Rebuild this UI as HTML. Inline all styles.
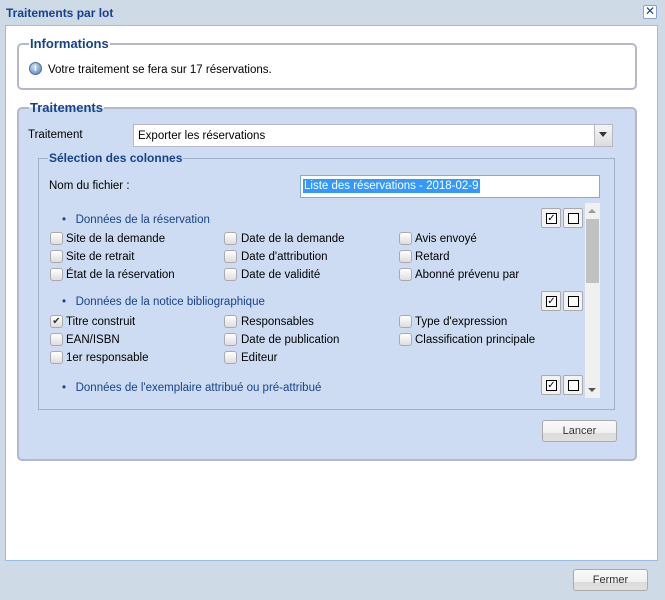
<!DOCTYPE html>
<html><head><meta charset="utf-8"><style>
*{box-sizing:border-box;margin:0;padding:0}
body{width:665px;height:600px;background:#cfdae7;font-family:"Liberation Sans",sans-serif;font-size:11px;color:#000;position:relative;overflow:hidden}
.a{position:absolute}
.title{left:6px;top:6px;font-weight:bold;color:#15428b;font-size:12px}
.close{left:643px;top:5px;width:14px;height:14px;border:1px solid #8aa3c6;background:#fff;border-radius:2px;font-size:12px;line-height:11px;text-align:center;color:#15428b}
.body{left:5px;top:25px;width:653px;height:536px;background:#fff;border:1px solid #99bbe8}
.fs{border:2px solid #b5b8c8;border-radius:5px}
.lg{background:#fff;color:#15428b;font-weight:bold;font-size:13px;padding:0 1px}
.cb{width:13px;height:13px;border:1px solid #aaa;border-radius:3px;background:linear-gradient(#fff,#ddd)}
.t{font-size:11.5px;padding-top:1px}
.btn{border:1px solid #aaa;border-radius:3px;background:linear-gradient(#fafafa 0,#f0f0f0 60%,#dcdcdc 61%,#e0e0e0);text-align:center;font-size:11px;line-height:21px;color:#333}
.hd{color:#15428b;font-size:11.5px;padding-top:1px}
.sq{width:20px;height:20px;border:1px solid #aaa;border-radius:2px;background:#f2f2f2}
.sq i{position:absolute;left:4px;top:4px;width:11px;height:11px;border:1px solid #000;background:#fff;font-style:normal;font-size:10px;line-height:9px;text-align:center}
</style></head><body>
<div class="a title">Traitements par lot</div>
<div class="a close">✕</div>
<div class="a body"></div>

<div class="a fs" style="left:17px;top:43px;width:620px;height:47px"></div>
<div class="a lg" style="left:29px;top:36px">Informations</div>
<div class="a" style="left:29px;top:62px;width:13px;height:13px;border-radius:50%;background:radial-gradient(circle at 40% 35%,#cfe0f5,#4c79b5);border:1px solid #4a6fa5;color:#fff;font-size:9px;font-weight:bold;text-align:center;line-height:11px">i</div>
<div class="a t" style="left:48px;top:63px">Votre traitement se fera sur 17 réservations.</div>

<div class="a fs" style="left:17px;top:107px;width:620px;height:354px;background:#cddcf2"></div>
<div class="a lg" style="left:29px;top:100px;background:linear-gradient(#fff 50%,#cddcf2 50%)">Traitements</div>
<div class="a t" style="left:28px;top:128px">Traitement</div>
<div class="a" style="left:133px;top:124px;width:480px;height:23px;background:#fff;border:1px solid #b5b8c8"></div>
<div class="a t" style="left:138px;top:129px">Exporter les réservations</div>
<div class="a" style="left:594px;top:125px;width:18px;height:21px;background:linear-gradient(#f5f5f5,#ddd);border-left:1px solid #b5b8c8"></div>
<div class="a" style="left:599px;top:132px;border:4px solid transparent;border-top:5px solid #333"></div>

<div class="a" style="left:38px;top:158px;width:577px;height:252px;border:1px solid #9fb0c8"></div>
<div class="a lg" style="left:48px;top:151px;background:linear-gradient(#cddcf2,#cddcf2);font-size:12px">Sélection des colonnes</div>
<div class="a t" style="left:49px;top:179px">Nom du fichier :</div>
<div class="a" style="left:300px;top:175px;width:300px;height:23px;background:#fff;border:1px solid #7eadd9"></div>
<div class="a" style="left:303px;top:179px;background:#3399ff;color:#fff;line-height:14px;padding:0 1px;font-size:11.5px">Liste des réservations - 2018-02-9</div>

<div class="a" style="left:585px;top:203px;width:15px;height:195px;background:#f0f0f0"></div>
<div class="a" style="left:586px;top:219px;width:13px;height:64px;background:#c1c1c1"></div>
<div class="a" style="left:588px;top:209px;border:4px solid transparent;border-bottom:4px solid #999;border-top:0"></div>
<div class="a" style="left:588px;top:388px;border:4px solid transparent;border-top:4px solid #555;border-bottom:0"></div>

<div class="a" style="left:38px;top:203px;width:547px;height:195px;overflow:hidden">
<div class="a hd" style="left:24px;top:10px">•&nbsp;&nbsp;&nbsp;Données de la réservation</div>
<div class="a sq" style="left:503px;top:5px"><i>✓</i></div><div class="a sq" style="left:525px;top:5px"><i></i></div>
<div class="a cb" style="left:12px;top:29px"></div><div class="a t" style="left:28px;top:29px">Site de la demande</div>
<div class="a cb" style="left:186px;top:29px"></div><div class="a t" style="left:203px;top:29px">Date de la demande</div>
<div class="a cb" style="left:361px;top:29px"></div><div class="a t" style="left:377px;top:29px">Avis envoyé</div>
<div class="a cb" style="left:12px;top:47px"></div><div class="a t" style="left:28px;top:47px">Site de retrait</div>
<div class="a cb" style="left:186px;top:47px"></div><div class="a t" style="left:203px;top:47px">Date d'attribution</div>
<div class="a cb" style="left:361px;top:47px"></div><div class="a t" style="left:377px;top:47px">Retard</div>
<div class="a cb" style="left:12px;top:65px"></div><div class="a t" style="left:28px;top:65px">État de la réservation</div>
<div class="a cb" style="left:186px;top:65px"></div><div class="a t" style="left:203px;top:65px">Date de validité</div>
<div class="a cb" style="left:361px;top:65px"></div><div class="a t" style="left:377px;top:65px">Abonné prévenu par</div>

<div class="a hd" style="left:24px;top:92px">•&nbsp;&nbsp;&nbsp;Données de la notice bibliographique</div>
<div class="a sq" style="left:503px;top:88px"><i>✓</i></div><div class="a sq" style="left:525px;top:88px"><i></i></div>
<div class="a cb" style="left:12px;top:112px;font-size:10px;line-height:11px;text-align:center;color:#333">✔</div><div class="a t" style="left:28px;top:112px">Titre construit</div>
<div class="a cb" style="left:186px;top:112px"></div><div class="a t" style="left:203px;top:112px">Responsables</div>
<div class="a cb" style="left:361px;top:112px"></div><div class="a t" style="left:377px;top:112px">Type d'expression</div>
<div class="a cb" style="left:12px;top:130px"></div><div class="a t" style="left:28px;top:130px">EAN/ISBN</div>
<div class="a cb" style="left:186px;top:130px"></div><div class="a t" style="left:203px;top:130px">Date de publication</div>
<div class="a cb" style="left:361px;top:130px"></div><div class="a t" style="left:377px;top:130px">Classification principale</div>
<div class="a cb" style="left:12px;top:148px"></div><div class="a t" style="left:28px;top:148px">1er responsable</div>
<div class="a cb" style="left:186px;top:148px"></div><div class="a t" style="left:203px;top:148px">Editeur</div>

<div class="a hd" style="left:24px;top:176px;line-height:16px;width:300px">•&nbsp;&nbsp;&nbsp;Données de l'exemplaire attribué ou pré-attribué<br>s'il y en a un</div>
<div class="a sq" style="left:503px;top:172px"><i>✓</i></div><div class="a sq" style="left:525px;top:172px"><i></i></div>
</div>

<div class="a btn" style="left:542px;top:420px;width:75px;height:22px">Lancer</div>
<div class="a btn" style="left:573px;top:569px;width:75px;height:22px">Fermer</div>
</body></html>
